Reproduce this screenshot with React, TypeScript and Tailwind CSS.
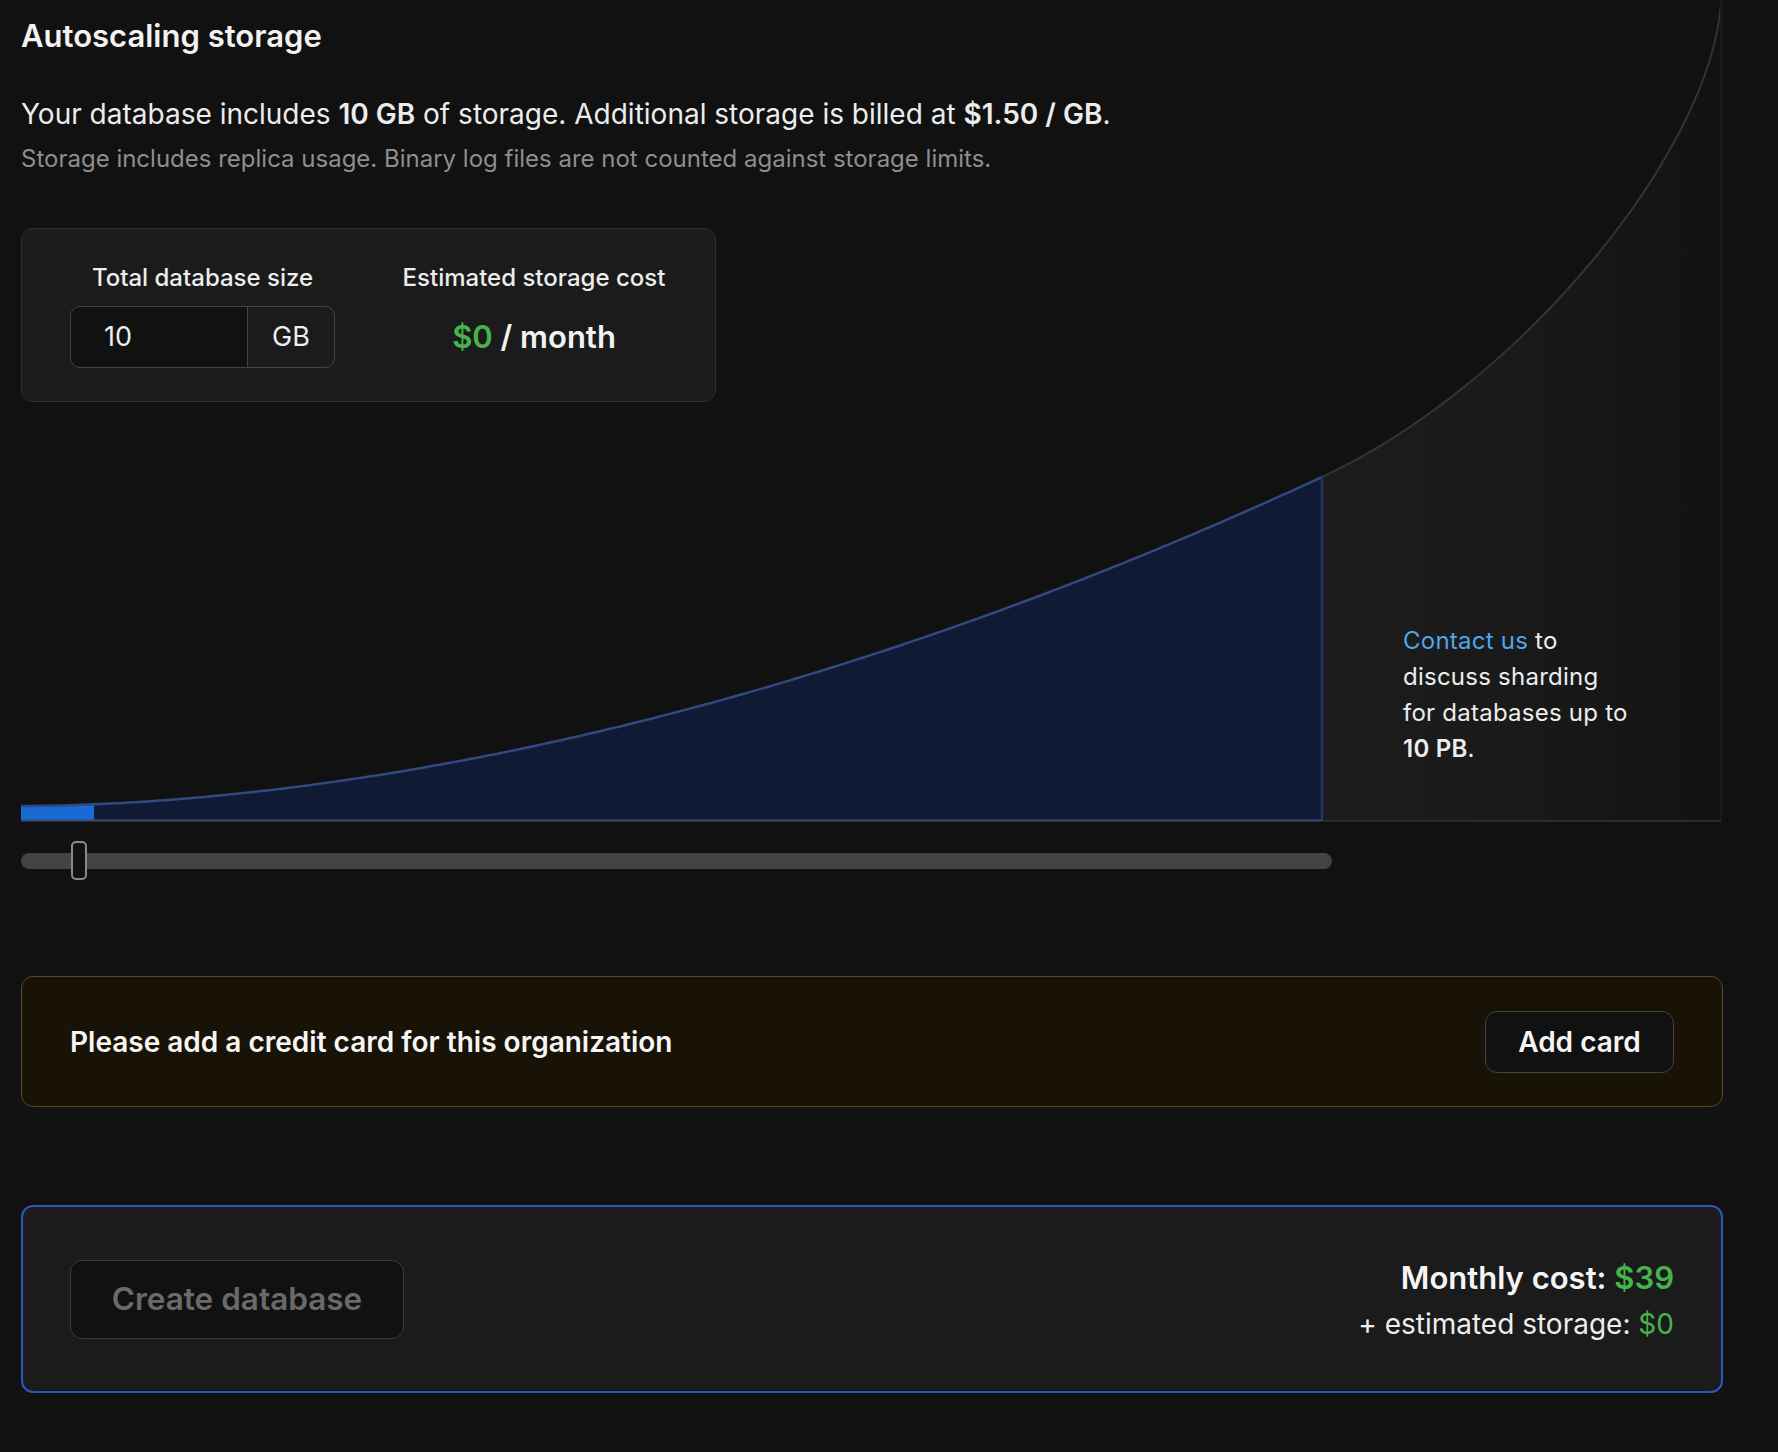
import React from 'react';

const SPLIT = 1301;
const END = 1700;
const BASE = 821;

// left part of the curve follows a rough power law, right part is a bezier up to the top edge
const heightAt = (x: number) => 15 + 329 * Math.pow(x / SPLIT, 1.83);

function buildCurve(to: number) {
  const pts: string[] = [];
  for (let x = 0; x < to; x += 6) {
    pts.push(`${x},${(BASE - heightAt(x)).toFixed(2)}`);
  }
  pts.push(`${to},${(BASE - heightAt(to)).toFixed(2)}`);
  return pts.join(' L ');
}

function StorageChart() {
  const curve = buildCurve(SPLIT);
  const blueCurve = buildCurve(73);
  const splitY = BASE - heightAt(SPLIT);
  const rightCurve = `C1501,${splitY - 93} 1690,150 ${END},3`;

  return (
    <svg
      className="col-start-1 row-start-1 h-[823px] w-[1702px]"
      viewBox="0 0 1702 823"
      fill="none"
    >
      <defs>
        <linearGradient id="beyond" x1="0" x2="1" y1="0" y2="0">
          <stop offset="0" stopColor="#1c1c1c" />
          <stop offset="0.45" stopColor="#1a1a1a" />
          <stop offset="1" stopColor="#121212" />
        </linearGradient>
      </defs>

      {/* region beyond the autoscaling limit */}
      <path d={`M${SPLIT},${splitY} ${rightCurve} L${END},${BASE} L${SPLIT},${BASE} Z`} fill="url(#beyond)" />
      <path d={`M${SPLIT},${splitY} ${rightCurve}`} stroke="#333333" strokeWidth={2} />
      <line x1={END} y1={0} x2={END} y2={BASE} stroke="#1b1b1b" strokeWidth={2} />
      <line x1={SPLIT} y1={BASE} x2={END} y2={BASE} stroke="#2a2a2a" strokeWidth={2} />

      {/* autoscaling range */}
      <path d={`M0,${BASE} L ${curve} L${SPLIT},${BASE} Z`} fill="#101a34" />
      <path d={`M0,${BASE} L ${blueCurve} L73,${BASE} Z`} fill="#1a6ad6" />
      <path d={`M ${curve}`} stroke="#30497f" strokeWidth={2.5} />
      <line x1={SPLIT} y1={splitY} x2={SPLIT} y2={BASE} stroke="#20356a" strokeWidth={2.5} />
      <line x1={0} y1={BASE - 0.5} x2={SPLIT} y2={BASE - 0.5} stroke="#3a4a72" strokeWidth={2} />
    </svg>
  );
}

export default function App() {
  return (
    <div className="min-h-screen bg-[#111111] pl-[21px] font-[family-name:Inter,ui-sans-serif,sans-serif] text-[#ededed]">
      <div className="w-[1702px]">
        {/* Header + chart */}
        <section className="grid h-[823px]">
          <StorageChart />

          <div className="col-start-1 row-start-1 flex flex-col pt-[16px]">
            <h2 className="text-[31px] leading-[40px] font-semibold text-[#f2f2f2]">Autoscaling storage</h2>
            <p className="mt-[38px] text-[28px] leading-[40px] text-[#ececec]">
              Your database includes <span className="font-semibold">10 GB</span> of storage. Additional storage is
              billed at <span className="font-semibold">$1.50 / GB</span>.
            </p>
            <p className="mt-[7px] text-[24px] leading-[36px] text-[#8e8e8e]">
              Storage includes replica usage. Binary log files are not counted against storage limits.
            </p>

            <div className="mt-[51px] flex h-[174px] w-[695px] gap-[66px] rounded-[12px] border border-[#2f2f2f] bg-[#1b1b1b] px-[48px] pt-[31px]">
              <div className="flex w-[265px] flex-col items-center">
                <span className="text-[24px] leading-[36px] font-medium text-[#ededed]">Total database size</span>
                <div className="mt-[10px] flex h-[62px] w-[265px] overflow-hidden rounded-[10px] border-[1.5px] border-[#444444]">
                  <div className="flex w-[176px] items-center bg-[#111111] pl-[33px] text-[27px] text-[#ededed]">10</div>
                  <div className="flex flex-1 items-center justify-center border-l-[1.5px] border-[#444444] text-[27px] text-[#ededed]">
                    GB
                  </div>
                </div>
              </div>
              <div className="flex flex-1 flex-col items-center">
                <span className="text-[24px] leading-[36px] font-medium text-[#ededed]">Estimated storage cost</span>
                <div className="mt-[10px] flex h-[62px] items-center justify-center text-[31px] font-semibold text-[#f2f2f2]">
                  <span className="text-[#46b34b]">$0</span>&nbsp;/ month
                </div>
              </div>
            </div>
          </div>

          <p className="col-start-1 row-start-1 mt-[623px] ml-[1382px] self-start justify-self-start whitespace-nowrap text-[24px] leading-[36px] tracking-[0.01em] text-[#ededed]">
            <span className="text-[#4ea6ea]">Contact us</span> to
            <br />
            discuss sharding
            <br />
            for databases up to
            <br />
            <span className="font-semibold">10 PB</span>.
          </p>
        </section>

        {/* Slider */}
        <div className="relative mt-[18px] flex h-[39px] w-[1311px] items-center">
          <div className="h-[16px] w-full rounded-full bg-[#434343]" />
          <div className="absolute top-0 left-[50px] h-[39px] w-[16px] rounded-[5px] border-2 border-[#8a8a8a] bg-[#111111]" />
        </div>

        {/* Credit card banner */}
        <div className="mt-[96px] flex h-[131px] items-center justify-between rounded-[12px] border-[1.5px] border-[#5b4921] bg-[#191206] px-[48px]">
          <span className="text-[28px] font-semibold text-[#f5f5f5]">Please add a credit card for this organization</span>
          <button className="h-[62px] w-[189px] rounded-[12px] border-[1.5px] border-[#444444] bg-[#111111] text-[28px] font-semibold text-[#f5f5f5]">
            Add card
          </button>
        </div>

        {/* Create database */}
        <div className="mt-[98px] flex h-[188px] items-center justify-between rounded-[12px] border-2 border-[#2d55c0] bg-[#1b1b1b] px-[47px]">
          <button className="h-[79px] w-[334px] rounded-[12px] border-[1.5px] border-[#3c3c3c] bg-[#111111] text-[31.5px] font-semibold text-[#6a6a6a]">
            Create database
          </button>
          <div className="mt-[4px] flex flex-col items-end">
            <span className="text-[31px] leading-[42px] font-semibold text-[#f5f5f5]">
              Monthly cost: <span className="text-[#46b34b]">$39</span>
            </span>
            <span className="mt-[3px] text-[28px] leading-[44px] text-[#ededed]">
              + estimated storage: <span className="text-[#46b34b]">$0</span>
            </span>
          </div>
        </div>
      </div>
    </div>
  );
}
